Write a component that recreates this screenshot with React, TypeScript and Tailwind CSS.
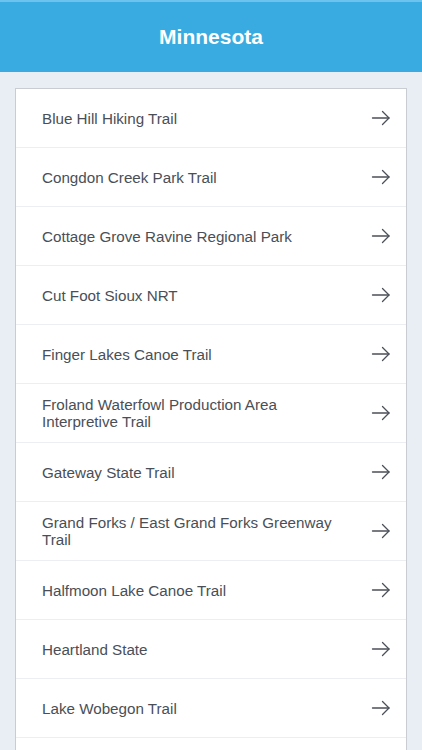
import React from "react";

const items = [
  "Blue Hill Hiking Trail",
  "Congdon Creek Park Trail",
  "Cottage Grove Ravine Regional Park",
  "Cut Foot Sioux NRT",
  "Finger Lakes Canoe Trail",
  "Froland Waterfowl Production Area Interpretive Trail",
  "Gateway State Trail",
  "Grand Forks / East Grand Forks Greenway Trail",
  "Halfmoon Lake Canoe Trail",
  "Heartland State",
  "Lake Wobegon Trail",
];

function Arrow() {
  return (
    <svg className="shrink-0" width="20" height="16" viewBox="0 0 20 16" fill="none" stroke="#4b5058" strokeWidth="1.3" strokeLinecap="round" strokeLinejoin="round">
      <path d="M1.5 8H18" />
      <path d="M11.5 1.5L18 8L11.5 14.5" />
    </svg>
  );
}

export default function App() {
  return (
    <div className="w-[422px] h-[750px] overflow-hidden bg-[#e9eef5]" style={{ fontFamily: '"Liberation Sans", Arial, sans-serif' }}>
      <div className="h-[72px] bg-[#3aabe1] border-t-2 border-[#6cc3ee] flex items-center justify-center">
        <span className="text-white font-bold text-[21px]">Minnesota</span>
      </div>
      <div className="pt-[16px] px-[15px]">
        <div className="bg-white border-[1.5px] border-[#c9cdd3]">
          {items.map((t, i) => (
            <div key={i} className="h-[59px] flex items-center justify-between pl-[26px] pr-[15px] border-b border-[#eceef2]">
              <span className="text-[15.2px] leading-[17px] text-[#4a4f57] max-w-[305px]">{t}</span>
              <Arrow />
            </div>
          ))}
          <div className="h-[40px]" />
        </div>
      </div>
    </div>
  );
}
